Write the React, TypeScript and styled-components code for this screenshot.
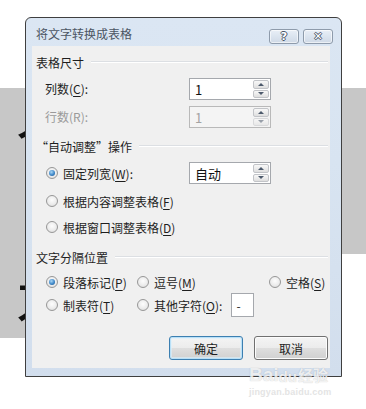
import React from 'react';
import styled, { createGlobalStyle, css } from 'styled-components';

const GlobalStyle = createGlobalStyle`
  html, body {
    margin: 0;
    padding: 0;
    background: #ffffff;
  }
  body {
    font-family: "Noto Sans CJK SC", "Noto Sans", sans-serif;
    font-size: 12px;
    color: #1e1e1e;
  }
`;

const Page = styled.div`
  position: relative;
  width: 366px;
  height: 409px;
  overflow: hidden;
  background: #ffffff;
`;

// fond de la page derrière la fenêtre
const Backdrop = styled.div`
  display: flex;
  align-items: flex-start;
  padding-top: 88px;
`;

const LeftGray = styled.div`
  flex: 0 0 200px;
  height: 250px;
  background: #c7c7c7;
  display: flex;
  flex-direction: column;
  padding-left: 16px;
  box-sizing: border-box;
`;

const RightGray = styled.div`
  flex: 1;
  height: 166px;
  background: #c7c7c7;
`;

// seul le bord gauche des grands caractères dépasse de la fenêtre
const BigGlyph = styled.div<{ $top: number }>`
  margin-top: ${({ $top }) => $top}px;
  width: 9px;
  overflow: hidden;
  font-family: "Noto Sans CJK SC", sans-serif;
  font-size: 60px;
  line-height: 60px;
  color: #111;
  white-space: nowrap;
`;

const Dialog = styled.div`
  position: absolute;
  left: 25px;
  top: 17px;
  width: 317px;
  height: 360px;
  box-sizing: border-box;
  border: 1px solid #3f3f3f;
  border-radius: 6px 6px 0 0;
  background: linear-gradient(180deg, #dbe6f3 0%, #d8e4f1 40%, #d2deed 100%);
  display: flex;
  flex-direction: column;
  padding: 0 11px 8px 6px;
`;

const TitleBar = styled.div`
  height: 28px;
  display: flex;
  justify-content: space-between;
  align-items: flex-start;
  margin-right: -3px;
`;

const TitleText = styled.div`
  padding: 8px 0 0 4px;
  font-size: 12px;
  line-height: 16px;
  color: #4b5563;
`;

const TitleButtons = styled.div`
  display: flex;
  gap: 4px;
  margin-top: 11px;
`;

const CaptionButton = styled.div`
  width: 30px;
  height: 15px;
  box-sizing: border-box;
  border: 1px solid #8e9bab;
  border-radius: 3px;
  background: linear-gradient(180deg, #e9eff7 0%, #dbe4ef 50%, #cfd9e6 100%);
  box-shadow: inset 0 0 0 1px rgba(255, 255, 255, 0.6);
  display: flex;
  align-items: center;
  justify-content: center;
  font-family: "DejaVu Sans", sans-serif;
  font-size: 11px;
  font-weight: bold;
  line-height: 13px;
  color: #ffffff;
  text-shadow: 1px 0 0 #4a5668, -1px 0 0 #4a5668, 0 1px 0 #4a5668, 0 -1px 0 #4a5668;
`;

const Client = styled.div`
  flex: 1;
  background: #f0f0f0;
  display: flex;
  flex-direction: column;
`;

const GroupHeader = styled.div<{ $top: number }>`
  height: 20px;
  margin-top: ${({ $top }) => $top}px;
  display: flex;
  align-items: center;
  padding: 0 2px 0 4px;
  font-size: 12px;
  color: #1e1e1e;

  &::after {
    content: '';
    flex: 1;
    height: 1px;
    margin-left: 7px;
    background: #dcdfe3;
    border-bottom: 1px solid #ffffff;
  }
`;

const Row = styled.div<{ $top: number; $h?: number; $left?: number }>`
  display: flex;
  align-items: center;
  height: ${({ $h }) => $h ?? 22}px;
  margin-top: ${({ $top }) => $top}px;
  padding-left: ${({ $left }) => $left ?? 13}px;
`;

const Label = styled.div<{ $w?: number; $disabled?: boolean }>`
  ${({ $w }) => ($w ? `width: ${$w}px; flex: 0 0 ${$w}px;` : '')}
  display: flex;
  align-items: center;
  white-space: nowrap;
  color: ${({ $disabled }) => ($disabled ? '#9a9a9a' : '#1e1e1e')};
  line-height: 16px;
`;

const Key = styled.span`
  text-decoration: underline;
  text-underline-offset: 2px;
`;

const SpinBox = styled.div<{ $disabled?: boolean }>`
  width: 82px;
  height: 22px;
  box-sizing: border-box;
  border: 1px solid ${({ $disabled }) => ($disabled ? '#b9b9b9' : '#a5a8ad')};
  background: ${({ $disabled }) => ($disabled ? '#f4f4f4' : '#ffffff')};
  display: flex;
  align-items: stretch;
  padding: 1px;
`;

const SpinValue = styled.div<{ $disabled?: boolean }>`
  flex: 1;
  display: flex;
  align-items: center;
  padding-left: 4px;
  font-size: 13px;
  color: ${({ $disabled }) => ($disabled ? '#a3a3a3' : '#111')};
`;

const SpinButtons = styled.div`
  width: 16px;
  display: flex;
  flex-direction: column;
  gap: 1px;
`;

const SpinButton = styled.div<{ $dim?: boolean }>`
  flex: 1;
  box-sizing: border-box;
  border: 1px solid #c2c4c8;
  border-radius: 2px;
  background: linear-gradient(180deg, #f8f8f8 0%, #ececec 50%, #dedede 100%);
  display: flex;
  align-items: center;
  justify-content: center;
  opacity: ${({ $dim }) => ($dim ? 0.55 : 1)};
`;

const Arrow = styled.div<{ $down?: boolean }>`
  width: 0;
  height: 0;
  border-left: 3px solid transparent;
  border-right: 3px solid transparent;
  ${({ $down }) =>
    $down
      ? css`
          border-top: 3px solid #4d5a6c;
        `
      : css`
          border-bottom: 3px solid #4d5a6c;
        `}
`;

const Radio = styled.span<{ $checked?: boolean }>`
  position: relative;
  flex: 0 0 12px;
  width: 12px;
  height: 12px;
  box-sizing: border-box;
  border-radius: 50%;
  border: 1px solid #979797;
  background: radial-gradient(circle at 50% 40%, #fdfdfd 0%, #ececec 55%, #d6d6d6 100%);
  margin-right: 5px;

  ${({ $checked }) =>
    $checked &&
    css`
      &::after {
        content: '';
        position: absolute;
        left: 2px;
        top: 2px;
        width: 6px;
        height: 6px;
        border-radius: 50%;
        background: radial-gradient(circle at 40% 35%, #a9d6f5 0%, #3d87c8 55%, #1b4f86 100%);
      }
    `}
`;

const Option = styled.div<{ $w?: number }>`
  display: flex;
  align-items: center;
  white-space: nowrap;
  ${({ $w }) => ($w ? `width: ${$w}px; flex: 0 0 ${$w}px;` : '')}
`;

const CharBox = styled.div`
  width: 23px;
  height: 24px;
  box-sizing: border-box;
  border: 1px solid #a5a8ad;
  background: #ffffff;
  margin-left: 9px;
  padding-left: 4px;
  display: flex;
  align-items: center;
  font-size: 12px;
`;

const Spacer = styled.div`
  flex: 1;
`;

const ButtonRow = styled.div`
  display: flex;
  justify-content: flex-end;
  gap: 11px;
  margin-top: 19px;
  padding-right: 2px;
`;

const PushButton = styled.div<{ $default?: boolean }>`
  width: 74px;
  height: 24px;
  box-sizing: border-box;
  border-radius: 3px;
  border: 1px solid ${({ $default }) => ($default ? '#3c7fb1' : '#707070')};
  background: linear-gradient(180deg, #f4f4f4 0%, #ececec 48%, #dedede 52%, #d0d0d0 100%);
  box-shadow: ${({ $default }) =>
    $default ? 'inset 0 0 0 1px #b9e0f7, inset 0 0 0 2px rgba(220, 240, 252, 0.6)' : 'inset 0 0 0 1px #fcfcfc'};
  display: flex;
  align-items: center;
  justify-content: center;
  font-size: 12px;
  color: #1e1e1e;
`;

const Watermark = styled.div`
  position: absolute;
  left: 249px;
  top: 357px;
  display: flex;
  flex-direction: column;
  align-items: flex-start;
  pointer-events: none;
  white-space: nowrap;
`;

const WatermarkLogo = styled.div`
  display: flex;
  align-items: flex-end;
  height: 28px;
  font-family: "Liberation Sans", sans-serif;
  font-size: 19px;
  font-weight: bold;
  line-height: 20px;
  color: rgba(255, 255, 255, 0.8);
  text-shadow: 0 0 1px rgba(110, 110, 110, 0.45);
`;

const Paw = styled.span`
  display: inline-flex;
  flex-direction: column;
  align-items: center;
  font-size: 15px;
  line-height: 16px;
`;

const WatermarkCn = styled.span`
  font-family: "Noto Sans CJK SC", sans-serif;
  font-size: 15px;
  line-height: 20px;
  margin-left: 1px;
`;

const WatermarkUrl = styled.div`
  margin-top: 2px;
  font-family: "Liberation Sans", sans-serif;
  font-size: 9px;
  font-weight: bold;
  line-height: 10px;
  letter-spacing: 0.2px;
  color: #e4e4e4;
`;

const SpinInput: React.FC<{ value: string; disabled?: boolean }> = ({ value, disabled }) => (
  <SpinBox $disabled={disabled}>
    <SpinValue $disabled={disabled}>{value}</SpinValue>
    <SpinButtons>
      <SpinButton>
        <Arrow />
      </SpinButton>
      <SpinButton $dim={disabled}>
        <Arrow $down />
      </SpinButton>
    </SpinButtons>
  </SpinBox>
);

const App: React.FC = () => {
  return (
    <Page>
      <GlobalStyle />
      <Backdrop>
        <LeftGray>
          <BigGlyph $top={18}>个</BigGlyph>
          <BigGlyph $top={22}>：</BigGlyph>
          <BigGlyph $top={20}>才</BigGlyph>
        </LeftGray>
        <RightGray />
      </Backdrop>

      <Dialog>
        <TitleBar>
          <TitleText>将文字转换成表格</TitleText>
          <TitleButtons>
            <CaptionButton>?</CaptionButton>
            <CaptionButton>✕</CaptionButton>
          </TitleButtons>
        </TitleBar>

        <Client>
          <GroupHeader $top={6}>表格尺寸</GroupHeader>
          <Row $top={6}>
            <Label $w={144}>
              列数(<Key>C</Key>):
            </Label>
            <SpinInput value="1" />
          </Row>
          <Row $top={6}>
            <Label $w={144} $disabled>
              行数(R):
            </Label>
            <SpinInput value="1" disabled />
          </Row>

          <GroupHeader $top={8}>“自动调整”操作</GroupHeader>
          <Row $top={6} $left={14}>
            <Option $w={143}>
              <Radio $checked />
              固定列宽(<Key>W</Key>):
            </Option>
            <SpinInput value="自动" />
          </Row>
          <Row $top={6} $left={14}>
            <Option>
              <Radio />
              根据内容调整表格(<Key>F</Key>)
            </Option>
          </Row>
          <Row $top={4} $left={14}>
            <Option>
              <Radio />
              根据窗口调整表格(<Key>D</Key>)
            </Option>
          </Row>

          <GroupHeader $top={9}>文字分隔位置</GroupHeader>
          <Row $top={4} $left={14}>
            <Option $w={91}>
              <Radio $checked />
              段落标记(<Key>P</Key>)
            </Option>
            <Option $w={132}>
              <Radio />
              逗号(<Key>M</Key>)
            </Option>
            <Option>
              <Radio />
              空格(<Key>S</Key>)
            </Option>
          </Row>
          <Row $top={0} $h={24} $left={14}>
            <Option $w={91}>
              <Radio />
              制表符(<Key>T</Key>)
            </Option>
            <Option>
              <Radio />
              其他字符(<Key>O</Key>):
            </Option>
            <CharBox>-</CharBox>
            <Spacer />
          </Row>

          <ButtonRow>
            <PushButton $default>确定</PushButton>
            <PushButton>取消</PushButton>
          </ButtonRow>
        </Client>
      </Dialog>

      <Watermark>
        <WatermarkLogo>
          Bai
          <Paw>du</Paw>
          <WatermarkCn>经验</WatermarkCn>
        </WatermarkLogo>
        <WatermarkUrl>jingyan.baidu.com</WatermarkUrl>
      </Watermark>
    </Page>
  );
};

export default App;
